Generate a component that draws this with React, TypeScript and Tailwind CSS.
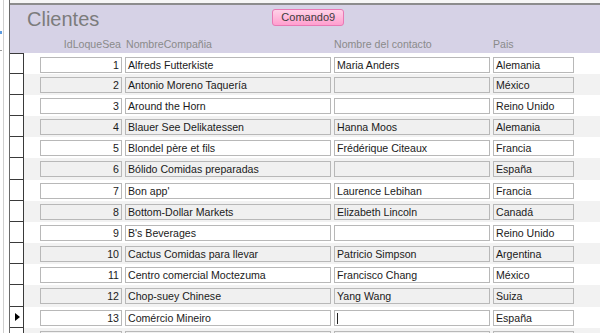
import React from "react";

type Row = { id: number; company: string; contact: string; country: string };

const rows: Row[] = [
  { id: 1, company: "Alfreds Futterkiste", contact: "Maria Anders", country: "Alemania" },
  { id: 2, company: "Antonio Moreno Taquería", contact: "", country: "México" },
  { id: 3, company: "Around the Horn", contact: "", country: "Reino Unido" },
  { id: 4, company: "Blauer See Delikatessen", contact: "Hanna Moos", country: "Alemania" },
  { id: 5, company: "Blondel père et fils", contact: "Frédérique Citeaux", country: "Francia" },
  { id: 6, company: "Bólido Comidas preparadas", contact: "", country: "España" },
  { id: 7, company: "Bon app'", contact: "Laurence Lebihan", country: "Francia" },
  { id: 8, company: "Bottom-Dollar Markets", contact: "Elizabeth Lincoln", country: "Canadá" },
  { id: 9, company: "B's Beverages", contact: "", country: "Reino Unido" },
  { id: 10, company: "Cactus Comidas para llevar", contact: "Patricio Simpson", country: "Argentina" },
  { id: 11, company: "Centro comercial Moctezuma", contact: "Francisco Chang", country: "México" },
  { id: 12, company: "Chop-suey Chinese", contact: "Yang Wang", country: "Suiza" },
  { id: 13, company: "Comércio Mineiro", contact: "", country: "España" },
  { id: 14, company: "", contact: "", country: "" },
];

const Field = ({ w, children, alt, right }: { w: string; children?: React.ReactNode; alt: boolean; right?: boolean }) => (
  <div
    className={`${w} h-[16px] mt-[3px] border border-[#b8b8b8] flex items-center px-[2px] overflow-hidden whitespace-nowrap leading-none ${
      alt ? "bg-[#f0f0f0]" : "bg-white"
    } ${right ? "justify-end" : ""}`}
  >
    {children}
  </div>
);

const App: React.FC = () => {
  return (
    <div className="w-[600px] h-[333px] overflow-hidden bg-white flex font-['Liberation_Sans',Arial,sans-serif] text-[10.6px] text-[#1a1a1a]">
      {/* window edge */}
      <div className="w-[10px] h-full shrink-0 border-r border-[#6a6a6a] flex">
        <div className="w-[3px] h-full flex flex-col">
          <div className="h-[31px] shrink-0" />
          <div className="h-[3px] w-[2px] shrink-0 bg-[#5b9be0]" />
          <div className="h-[16px] shrink-0" />
          <div className="h-[1px] w-[2px] shrink-0 bg-[#9a9a9a]" />
        </div>
        <div className="w-[1px] h-full bg-[#cfcfcf]" />
      </div>

      <div className="flex-1 flex flex-col">
        <div className="h-[3px] shrink-0 bg-[#f6f6f6]" />
        {/* form header */}
        <header className="h-[50px] shrink-0 bg-[#d6d2e6] border-t-2 border-[#8c8c8c] flex flex-col">
          <div className="flex items-start h-[31px] shrink-0">
            <span className="ml-[17px] mt-[1px] text-[20px] leading-[26px] text-[#7c7c7c]">Clientes</span>
            <button className="ml-[173px] mt-[4px] w-[72px] h-[17px] rounded-[3px] border border-[#e879b4] bg-gradient-to-b from-[#ffd2e8] to-[#ff9fcf] text-[11px] leading-none text-[#3c3c3c]">
              Comando9
            </button>
          </div>
          <div className="flex items-center h-[17px] shrink-0 text-[#8a8a8a]">
            <span className="w-[112px] text-right pr-[1px]">IdLoqueSea</span>
            <span className="ml-[4px] w-[208px]">NombreCompañia</span>
            <span className="w-[159px]">Nombre del contacto</span>
            <span>Pais</span>
          </div>
        </header>

        {/* continuous form rows */}
        <div className="flex flex-col">
          {rows.map((r, i) => {
            const alt = i % 2 === 1;
            const tall = i === 5 || i === 11;
            return (
              <div
                key={r.id}
                className={`flex shrink-0 ${tall ? "h-[22px]" : "h-[21px]"} ${alt ? "bg-[#f2f2f2]" : "bg-white"}`}
              >
                <div
                  className={`w-[14px] h-full shrink-0 bg-white border-r border-b border-[#3a3a3a] flex items-center justify-center ${
                    i === 0 ? "border-t" : ""
                  }`}
                >
                  {r.id === 13 && (
                    <svg width="5" height="8" viewBox="0 0 5 8" className="ml-[1px]">
                      <path d="M0 0 L5 4 L0 8 Z" fill="#000" />
                    </svg>
                  )}
                </div>
                <div className={`flex ${i === 0 ? "mt-[1px]" : ""}`}>
                  <div className="ml-[16px]">
                    <Field w="w-[82px]" alt={alt} right>
                      {r.company ? r.id : ""}
                    </Field>
                  </div>
                  <div className="ml-[3px]">
                    <Field w="w-[206px]" alt={alt}>
                      {r.company}
                    </Field>
                  </div>
                  <div className="ml-[3px]">
                    <Field w="w-[156px]" alt={alt}>
                      {r.id === 13 ? <span className="w-[1px] h-[11px] bg-[#222]" /> : r.contact}
                    </Field>
                  </div>
                  <div className="ml-[3px]">
                    <Field w="w-[81px]" alt={alt}>
                      {r.country}
                    </Field>
                  </div>
                </div>
              </div>
            );
          })}
        </div>
      </div>
    </div>
  );
};

export default App;
